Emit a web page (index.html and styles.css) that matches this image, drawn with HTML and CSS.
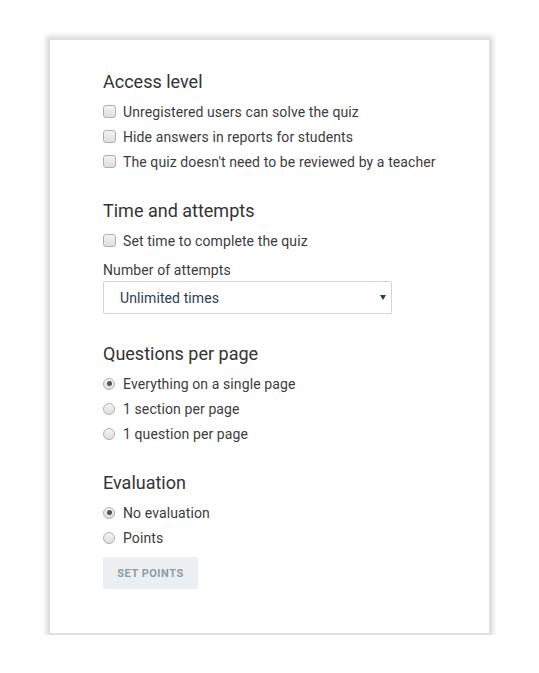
FILE: index.html
```html
<!DOCTYPE html>
<html>

<head>
  <meta charset="utf-8">
  <meta name="viewport" content="width=device-width, initial-scale=1">
  <title>Quiz settings</title>
  <link rel="stylesheet" href="styles.css">
</head>

<body>
  <div class="card">
    <div class="section">
      <h2>Access level</h2>
      <label class="option"><input type="checkbox"> Unregistered users can solve the quiz</label>
      <label class="option"><input type="checkbox"> Hide answers in reports for students</label>
      <label class="option"><input type="checkbox"> The quiz doesn't need to be reviewed by a teacher</label>
    </div>

    <div class="section">
      <h2>Time and attempts</h2>
      <label class="option"><input type="checkbox"> Set time to complete the quiz</label>
      <div class="field-label">Number of attempts</div>
      <div class="select-wrap">
        <select class="select">
          <option>Unlimited times</option>
          <option>1 time</option>
          <option>2 times</option>
          <option>3 times</option>
        </select>
      </div>
    </div>

    <div class="section">
      <h2>Questions per page</h2>
      <label class="option"><input type="radio" name="per-page" checked> Everything on a single page</label>
      <label class="option"><input type="radio" name="per-page"> 1 section per page</label>
      <label class="option"><input type="radio" name="per-page"> 1 question per page</label>
    </div>

    <div class="section">
      <h2>Evaluation</h2>
      <label class="option"><input type="radio" name="evaluation" checked> No evaluation</label>
      <label class="option"><input type="radio" name="evaluation"> Points</label>
      <button class="btn-points">SET POINTS</button>
    </div>
  </div>
</body>

</html>
```

FILE: styles.css
```css
* {
  margin: 0;
  padding: 0;
  box-sizing: border-box;
}

body {
  font-family: Roboto, 'Liberation Sans', Arial, sans-serif;
  background: #fff;
  color: #333;
}

.card {
  width: 443px;
  margin: 38px 0 0 48px;
  padding: 30px 40px 44px 53px;
  background: #fff;
  border: 2px solid #dfdfdf;
  box-shadow: 0 0 5px 2px rgba(0, 0, 0, 0.15);
}

.section + .section {
  margin-top: 25px;
}

h2 {
  font-size: 18px;
  font-weight: 400;
  line-height: 24px;
  color: #333;
  margin-bottom: 5px;
}

.option {
  display: flex;
  align-items: center;
  height: 25px;
  font-size: 14px;
  letter-spacing: 0.1px;
  color: #3c3c3c;
  cursor: pointer;
}

.option input {
  -webkit-appearance: none;
  appearance: none;
  width: 13px;
  height: 13px;
  margin-right: 7px;
  border: 1px solid #b0b0b0;
  background: linear-gradient(#f4f4f4, #dedede);
  flex-shrink: 0;
}

.option input[type="checkbox"] {
  border-radius: 3px;
}

.option input[type="radio"] {
  border-radius: 50%;
  width: 12px;
  height: 12px;
  margin-right: 8px;
  position: relative;
}

.option input[type="radio"]:checked::after {
  content: '';
  position: absolute;
  left: 2.5px;
  top: 2.5px;
  width: 5px;
  height: 5px;
  border-radius: 50%;
  background: #555;
}

.field-label {
  font-size: 14px;
  line-height: 20px;
  letter-spacing: 0.1px;
  color: #3c3c3c;
  margin-top: 7px;
  margin-bottom: 1px;
}

.select-wrap {
  position: relative;
  width: 289px;
  margin-bottom: 28px;
}

.select-wrap::after {
  content: '';
  position: absolute;
  right: 6px;
  top: 14px;
  border-left: 3px solid transparent;
  border-right: 3px solid transparent;
  border-top: 5px solid #2c3e50;
  pointer-events: none;
}

.select {
  -webkit-appearance: none;
  appearance: none;
  width: 100%;
  height: 33px;
  padding: 0 20px 0 16px;
  border: 1px solid #d3d3d3;
  border-radius: 2px;
  background: #fff;
  font-family: inherit;
  font-size: 14px;
  letter-spacing: 0.1px;
  color: #2c3e50;
}

.btn-points {
  margin-top: 7px;
  width: 95px;
  height: 32px;
  border: none;
  border-radius: 2px;
  background: #eceff1;
  color: #8e9ca6;
  font-family: inherit;
  font-size: 11px;
  font-weight: 700;
  letter-spacing: 0.5px;
  cursor: pointer;
}
```
